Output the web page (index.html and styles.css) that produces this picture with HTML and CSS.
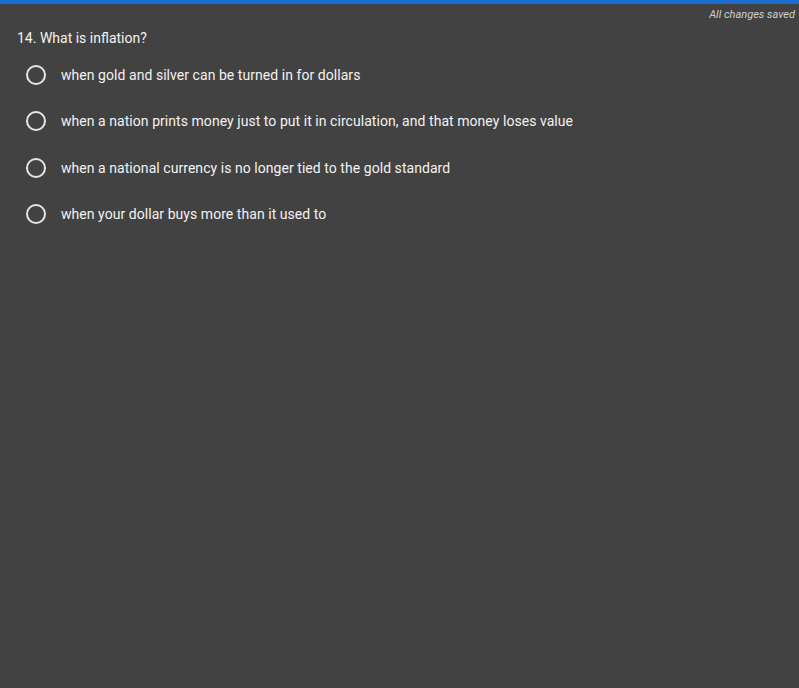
FILE: index.html
```html
<!DOCTYPE html>
<html>
<head>
  <title>Quiz</title>
  <link rel="stylesheet" href="styles.css">
</head>
<body>
  <div class="topbar"></div>
  <div class="status">All changes saved</div>
  <main class="question">
    <h2>14. What is inflation?</h2>
    <div class="options">
      <label class="option"><span class="radio"></span>when gold and silver can be turned in for dollars</label>
      <label class="option"><span class="radio"></span>when a nation prints money just to put it in circulation, and that money loses value</label>
      <label class="option"><span class="radio"></span>when a national currency is no longer tied to the gold standard</label>
      <label class="option"><span class="radio"></span>when your dollar buys more than it used to</label>
    </div>
  </main>
</body>
</html>
```

FILE: styles.css
```css
html, body {
  height: 100%;
}
body {
  margin: 0;
  background-color: #424242;
  color: #f2f2f2;
  font-family: Roboto, "Noto Sans", sans-serif;
}
.topbar {
  height: 4px;
  background-color: #1a6fd0;
}
.status {
  text-align: right;
  font-size: 11px;
  font-style: italic;
  color: #cfcfcf;
  padding: 3px 4px 0 0;
  height: 15px;
  line-height: 15px;
}
.question {
  padding: 0 17px;
}
.question h2 {
  margin: 6px 0 0;
  font-size: 14px;
  font-weight: normal;
  line-height: 20px;
}
.options {
  display: flex;
  flex-direction: column;
  padding: 17px 0 0 9px;
  gap: 26.3px;
}
.option {
  display: flex;
  align-items: center;
  gap: 15px;
  font-size: 14px;
  letter-spacing: 0.05px;
  line-height: 20px;
}
.radio {
  width: 16px;
  height: 16px;
  border: 2px solid #e6e6e6;
  border-radius: 50%;
}
```
